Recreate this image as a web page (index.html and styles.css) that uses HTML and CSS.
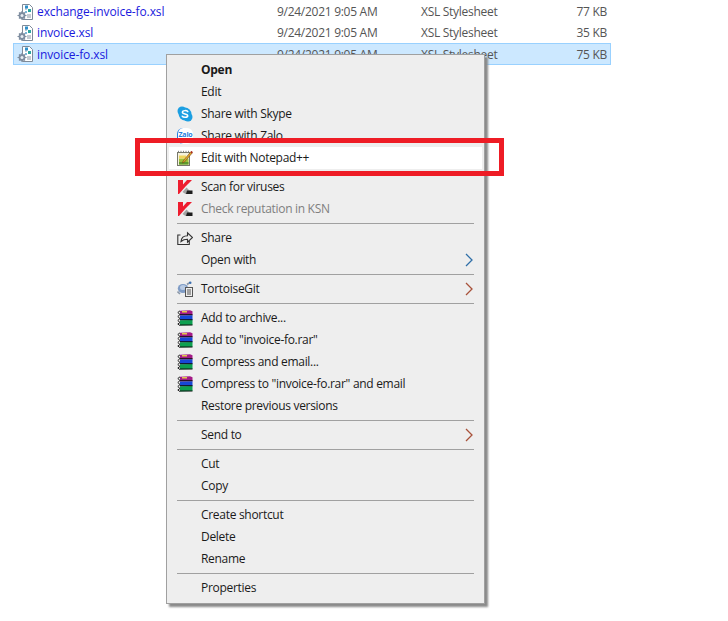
FILE: index.html
```html
<!DOCTYPE html>
<html lang="en">
<head>
<meta charset="utf-8">
<title>Context menu</title>
<link rel="stylesheet" href="styles.css">
</head>
<body>
<svg class="defs" aria-hidden="true">
  <symbol id="xsl" viewBox="0 0 16 16">
    <path d="M5.5.5h7l3 3v12h-10z" fill="#fff" stroke="#7d8a99"/>
    <path d="M8 5h2M10 11h4M10 13h4" stroke="#8b97a5"/>
    <rect x="8" y="1.5" width="3" height="3" fill="#2f8fc9"/>
    <rect x="11" y="5" width="3" height="3" fill="#2aa6a0"/>
    <path d="M8 7h2v2H8z" fill="#7fb8d8"/>
    <circle cx="5" cy="11.5" r="3.4" fill="#7f8ea0"/>
    <path d="M5 7v9M.5 11.5h9M2 8.5l6 6M8 8.5l-6 6" stroke="#7f8ea0" stroke-width="1.2"/>
    <circle cx="5" cy="11.5" r="1.5" fill="#e8edf2"/>
  </symbol>
  <symbol id="skype" viewBox="0 0 16 16">
    <circle cx="5" cy="5" r="4.5" fill="#1c9fe2"/>
    <circle cx="11" cy="11" r="4.5" fill="#1c9fe2"/>
    <circle cx="8" cy="8" r="6.4" fill="#1c9fe2"/>
    <path d="M10.8 5.6C10 4.4 5.6 4 5.4 6.2c-.1 2.300 5.400 1.300 5.300 3.700-.1 2-4.700 1.800-5.500.3" fill="none" stroke="#fff" stroke-width="1.500" stroke-linecap="round"/>
  </symbol>
  <symbol id="notepad" viewBox="0 0 16 16">
    <rect x=".5" y="2.500" width="12" height="13" fill="#f4f1dc" stroke="#77786a"/>
    <path d="M1.500 2V.8M4 2V.8M6.500 2V.8M9 2V.8M11.500 2V.8" stroke="#888"/>
    <path d="M2 8.500h9.500V14.500H2z" fill="#9ec13b"/>
    <path d="M2 12h9.500v2.500H2z" fill="#5f9a2d"/>
    <path d="M2 5.500h7v3H2z" fill="#f0d45c"/>
    <path d="M6 11 14 1.500l1.500 1.200L7.500 12l-2 1z" fill="#d9a32c" stroke="#6b3a12" stroke-width=".5"/>
    <path d="M13.500 2.200 14.400 1l1.400 1.100-1 1.300z" fill="#b3261e"/>
  </symbol>
  <symbol id="kaspersky" viewBox="0 0 16 16">
    <path d="M1 1h5v4.500L10 1h5L8.500 7.500 2 15H1z" fill="#ee1c2e"/>
    <path d="M5.500 13 9.500 8.500 15 14v1H8.500z" fill="#a3a3a3"/>
    <path d="M10 11.500h5.500V15H9z" fill="#1d1d1d"/>
  </symbol>
  <symbol id="share" viewBox="0 0 16 16">
    <path d="M3.500 5H.8v9.500h11.500V10M4 11.500c.3-3.500 2.800-5.700 6.500-5.700V2.800l5 4.700-5 4.700V9.200c-2.800 0-4.600.6-6.500 2.300z" fill="none" stroke="#333" stroke-width="1.100"/>
  </symbol>
  <symbol id="tortoise" viewBox="0 0 16 16">
    <ellipse cx="6" cy="7.500" rx="5.200" ry="4.500" fill="#7f9cc6"/>
    <ellipse cx="6" cy="6.500" rx="3" ry="2.500" fill="#b9cbe4"/>
    <path d="M.5 10.500 3 13M10 3.500l2-1.500" stroke="#8a97a8" stroke-width="1.600"/>
    <circle cx="13.200" cy="1.800" r="1.300" fill="#3c6fb0"/>
    <rect x="8.500" y="6.500" width="7" height="9" fill="#eee" stroke="#555"/>
    <path d="M10 9h4M10 11h4M10 13h4" stroke="#555"/>
  </symbol>
  <symbol id="rar" viewBox="0 0 16 16">
    <path d="M3 .8 13 .2l2.500 1v4L3 5.500z" fill="#a31a86"/>
    <path d="M3 5.500 15.500 5.200v4.800L3 10.300z" fill="#1747d6"/>
    <path d="M3 10.300 15.500 10v5L3 15.600z" fill="#0da050"/>
    <path d="M3 4.700h12.500M3 9.700h12.500M3 15h12.500" stroke="#111"/>
    <path d="M5 2.500h5V1H5z" fill="#e3c84a"/>
    <path d="M3 .8 .8 2.500 3 4.500.8 6.500 3 8.500.8 10.500 3 12.500.8 14 3 15.600" fill="#eee" stroke="#222"/>
  </symbol>
  <symbol id="arrow" viewBox="0 0 8 14">
    <path d="M1 1l6 6-6 6" fill="none" stroke="#2f6fa8" stroke-width="1.300"/>
  </symbol>
  <symbol id="arrow-red" viewBox="0 0 8 14">
    <path d="M1 1l6 6-6 6" fill="none" stroke="#a8523a" stroke-width="1.300"/>
  </symbol>
</svg>

<section class="files">
  <div class="file">
    <svg class="file-icon"><use href="#xsl"/></svg>
    <span class="name">exchange-invoice-fo.xsl</span>
    <span>9/24/2021 9:05 AM</span>
    <span>XSL Stylesheet</span>
    <span class="size">77 KB</span>
  </div>
  <div class="file">
    <svg class="file-icon"><use href="#xsl"/></svg>
    <span class="name">invoice.xsl</span>
    <span>9/24/2021 9:05 AM</span>
    <span>XSL Stylesheet</span>
    <span class="size">35 KB</span>
  </div>
  <div class="file selected">
    <svg class="file-icon"><use href="#xsl"/></svg>
    <span class="name">invoice-fo.xsl</span>
    <span>9/24/2021 9:05 AM</span>
    <span>XSL Stylesheet</span>
    <span class="size">75 KB</span>
  </div>
</section>

<nav class="menu">
  <div class="item bold"><span class="slot"></span>Open</div>
  <div class="item"><span class="slot"></span>Edit</div>
  <div class="item"><span class="slot"><svg class="ico"><use href="#skype"/></svg></span>Share with Skype</div>
  <div class="item"><span class="slot"><span class="zalo">Zalo</span></span>Share with Zalo</div>
  <div class="item white"><span class="slot"><svg class="ico"><use href="#notepad"/></svg></span>Edit with Notepad++</div>
  <hr class="sep sep-blank">
  <div class="item"><span class="slot"><svg class="ico"><use href="#kaspersky"/></svg></span>Scan for viruses</div>
  <div class="item muted"><span class="slot"><svg class="ico"><use href="#kaspersky"/></svg></span>Check reputation in KSN</div>
  <hr class="sep">
  <div class="item"><span class="slot"><svg class="ico"><use href="#share"/></svg></span>Share</div>
  <div class="item"><span class="slot"></span>Open with<svg class="chev"><use href="#arrow"/></svg></div>
  <hr class="sep">
  <div class="item"><span class="slot"><svg class="ico"><use href="#tortoise"/></svg></span>TortoiseGit<svg class="chev"><use href="#arrow-red"/></svg></div>
  <hr class="sep">
  <div class="item"><span class="slot"><svg class="ico"><use href="#rar"/></svg></span>Add to archive...</div>
  <div class="item"><span class="slot"><svg class="ico"><use href="#rar"/></svg></span>Add to "invoice-fo.rar"</div>
  <div class="item"><span class="slot"><svg class="ico"><use href="#rar"/></svg></span>Compress and email...</div>
  <div class="item"><span class="slot"><svg class="ico"><use href="#rar"/></svg></span>Compress to "invoice-fo.rar" and email</div>
  <div class="item"><span class="slot"></span>Restore previous versions</div>
  <hr class="sep">
  <div class="item"><span class="slot"></span>Send to<svg class="chev"><use href="#arrow-red"/></svg></div>
  <hr class="sep">
  <div class="item"><span class="slot"></span>Cut</div>
  <div class="item"><span class="slot"></span>Copy</div>
  <hr class="sep">
  <div class="item"><span class="slot"></span>Create shortcut</div>
  <div class="item"><span class="slot"></span>Delete</div>
  <div class="item"><span class="slot"></span>Rename</div>
  <hr class="sep">
  <div class="item"><span class="slot"></span>Properties</div>
</nav>

<div class="callout"></div>
</body>
</html>
```

FILE: styles.css
```css
* {
  box-sizing: border-box;
}

html,
body {
  margin: 0;
  height: 621px;
  background: #fff;
  overflow: hidden;
}

body {
  position: relative;
  font-family: "Open Sans", "Noto Sans", sans-serif;
  font-size: 12px;
  letter-spacing: -0.28px;
  color: #1a1a1a;
}

.defs {
  display: none;
}

.files {
  display: flex;
  flex-direction: column;
  width: 598px;
  margin-left: 13px;
  padding-top: 1px;
}

.file {
  display: grid;
  grid-template-columns: 15px 245px 144px 1fr 60px;
  align-items: center;
  height: 21px;
  padding: 0 4px;
  color: #555;
}

.file.selected {
  height: 22px;
  background: #cce8ff;
  border: 1px solid #99d1ff;
  padding: 0 3px;
}

.file-icon {
  width: 16px;
  height: 16px;
}

.name {
  padding-left: 5px;
  color: #1a1add;
  letter-spacing: -0.1px;
}

.size {
  text-align: right;
}

.menu {
  position: absolute;
  left: 166px;
  top: 54px;
  width: 319px;
  height: 550px;
  display: flex;
  flex-direction: column;
  padding: 4px 2px;
  background: #eeeeee;
  border: 1px solid #a0a0a0;
  box-shadow: 3px 3px 2px 0 #8a8a8a;
  letter-spacing: -0.3px;
}

.item {
  display: flex;
  align-items: flex-start;
  height: 22px;
  flex: none;
  padding-right: 9px;
  line-height: 21px;
  white-space: nowrap;
}

.item.bold {
  font-weight: 700;
  letter-spacing: -0.28px;
}

.item.muted {
  color: #7f7f7f;
}

.item.white {
  background: #fff;
}

.slot {
  display: flex;
  align-items: center;
  justify-content: center;
  flex: none;
  width: 32px;
  height: 22px;
}

.ico {
  width: 16px;
  height: 16px;
}

.zalo {
  display: block;
  width: 16px;
  height: 16px;
  border-radius: 6px;
  border-left: 1px solid #1f7fe0;
  background: #fff;
  color: #1f7fe0;
  font-size: 7px;
  font-weight: 700;
  letter-spacing: -0.2px;
  line-height: 14px;
  text-align: center;
}

.chev {
  width: 8px;
  height: 14px;
  margin: 4px 0 0 auto;
}

.sep {
  flex: none;
  width: 297px;
  height: 1px;
  margin: 3px 0 3px 8px;
  border: 0;
  background: #a0a0a0;
}

.sep-blank {
  background: transparent;
}

.callout {
  position: absolute;
  left: 135px;
  top: 138px;
  width: 369px;
  height: 38px;
  border: 5px solid #ee1c25;
}
```
